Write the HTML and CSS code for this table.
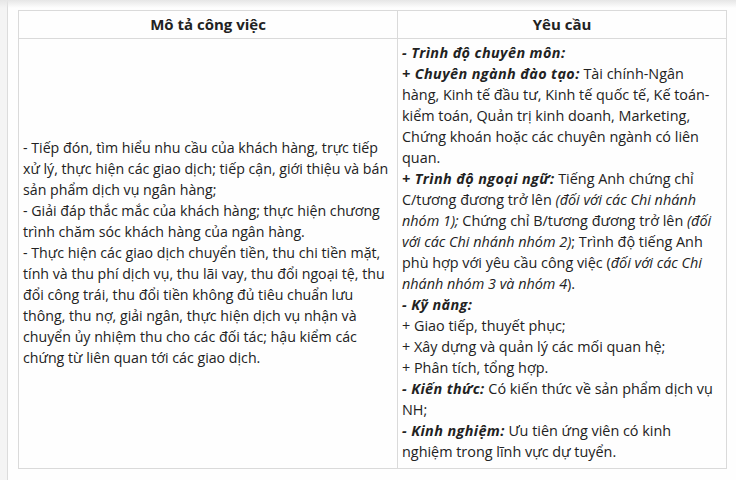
FILE: index.html
```html
<!DOCTYPE html>
<html lang="vi">
<head>
<meta charset="utf-8">
<link rel="stylesheet" href="styles.css">
</head>
<body>
<div class="topshade"></div>
<div class="layout">
  <aside class="rail"></aside>
  <main class="content">
    <table class="jobs">
      <colgroup><col class="c1"><col class="c2"></colgroup>
      <thead>
        <tr><th>Mô tả công việc</th><th>Yêu cầu</th></tr>
      </thead>
      <tbody>
        <tr>
          <td class="desc">- Tiếp đón, tìm hiểu nhu cầu của khách hàng, trực tiếp xử lý, thực hiện các giao dịch; tiếp cận, giới thiệu và bán sản phẩm dịch vụ ngân hàng;<br>- Giải đáp thắc mắc của khách hàng; thực hiện chương trình chăm sóc khách hàng của ngân hàng.<br>- Thực hiện các giao dịch chuyển tiền, thu chi tiền mặt, tính và thu phí dịch vụ, thu lãi vay, thu đổi ngoại tệ, thu đổi công trái, thu đổi tiền không đủ tiêu chuẩn lưu thông, thu nợ, giải ngân, thực hiện dịch vụ nhận và chuyển ủy nhiệm thu cho các đối tác; hậu kiểm các chứng từ liên quan tới các giao dịch.</td>
          <td class="req"><b class="lbl">- Trình độ chuyên môn:</b><br><b class="lbl">+ Chuyên ngành đào tạo:</b> Tài chính-Ngân hàng, Kinh tế đầu tư, Kinh tế quốc tế, Kế toán-kiểm toán, Quản trị kinh doanh, Marketing, Chứng khoán hoặc các chuyên ngành có liên quan.<br><b class="lbl">+ Trình độ ngoại ngữ:</b> Tiếng Anh chứng chỉ C/tương đương trở lên <i class="note">(đối với các Chi nhánh nhóm 1);</i> Chứng chỉ B/tương đương trở lên <i class="note">(đối với các Chi nhánh nhóm 2)</i>; Trình độ tiếng Anh phù hợp với yêu cầu công việc (<i class="note">đối với các Chi nhánh nhóm 3 và nhóm 4</i>).<br><b class="lbl">- Kỹ năng:</b><br>+ Giao tiếp, thuyết phục;<br>+ Xây dựng và quản lý các mối quan hệ;<br>+ Phân tích, tổng hợp.<br><b class="lbl">- Kiến thức:</b> Có kiến thức về sản phẩm dịch vụ NH;<br><b class="lbl">- Kinh nghiệm:</b> Ưu tiên ứng viên có kinh nghiệm trong lĩnh vực dự tuyển.</td>
        </tr>
      </tbody>
    </table>
  </main>
</div>
</body>
</html>
```
FILE: styles.css
```css
html, body {
  margin: 0;
  padding: 0;
  background: #fefefe;
}
body {
  font-family: "Open Sans", "Noto Sans", sans-serif;
  color: #222;
  position: relative;
  height: 480px;
  overflow: hidden;
}
.topshade {
  position: absolute;
  left: 0;
  top: 0;
  right: 0;
  height: 8px;
  background: linear-gradient(#e6e6e6, rgba(255,255,255,0));
  pointer-events: none;
}
.layout {
  display: flex;
  height: 480px;
}
.rail {
  width: 7px;
  background: #f4f4f4;
  border-right: 1px solid #dcdcdc;
  flex: none;
}
.content {
  padding: 10px 0 0 10px;
}
.jobs {
  border-collapse: collapse;
  table-layout: fixed;
  width: 708px;
  font-size: 14.4px;
  line-height: 21px;
}
.c1 { width: 379px; }
.c2 { width: 329px; }
.jobs th, .jobs td {
  border: 1px solid #dadada;
}
.jobs th {
  height: 27px;
  padding: 0 4px;
  font-weight: 700;
  font-size: 15px;
  text-align: center;
  vertical-align: middle;
}
.jobs td {
  padding: 3px 4px 6px 4px;
  vertical-align: middle;
}
.jobs td.desc {
  padding-right: 2px;
  font-size: 14.2px;
}
.jobs td.req {
  vertical-align: top;
  padding-right: 8px;
}
.lbl {
  font-weight: 700;
  font-style: italic;
  letter-spacing: 0.4px;
}
.note {
  font-style: italic;
}
```
